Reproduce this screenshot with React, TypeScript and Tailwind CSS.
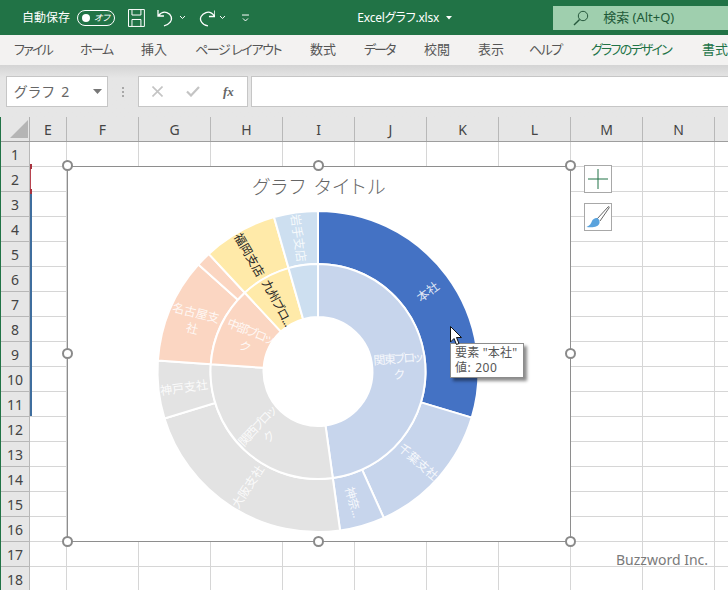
import React from "react";

const tabs = [
  { t: "ファイル", c: "w-[38px] tracking-[-1.75px]" },
  { t: "ホーム", c: "w-[33px] tracking-[-1.5px]" },
  { t: "挿入", c: "w-[26px]" },
  { t: "ページ レイアウト", c: "w-[87px] tracking-[-1.4px]" },
  { t: "数式", c: "w-[26px]" },
  { t: "データ", c: "w-[32px] tracking-[-2px]" },
  { t: "校閲", c: "w-[26px]" },
  { t: "表示", c: "w-[26px]" },
  { t: "ヘルプ", c: "w-[33px] tracking-[-1.5px] -ml-[3px] mr-[3px]" },
  { t: "グラフのデザイン", c: "w-[81px] tracking-[-1.75px] text-[#217346] -ml-[2px] mr-[2px]" },
  { t: "書式", c: "w-[26px] text-[#217346]" },
];

const cols = [
  { n: "E", c: "w-[37px]" },
  { n: "F", c: "w-[72px]" },
  { n: "G", c: "w-[72px]" },
  { n: "H", c: "w-[72px]" },
  { n: "I", c: "w-[72px]" },
  { n: "J", c: "w-[72px]" },
  { n: "K", c: "w-[72px]" },
  { n: "L", c: "w-[72px]" },
  { n: "M", c: "w-[72px]" },
  { n: "N", c: "w-[72px]" },
  { n: "", c: "w-[72px]" },
];

const rows = Array.from({ length: 18 }, (_, i) => i + 1);

const CX = 318;
const CY = 371.5;

function pt(r: number, deg: number) {
  const a = ((deg - 90) * Math.PI) / 180;
  return `${(CX + r * Math.cos(a)).toFixed(2)} ${(CY + r * Math.sin(a)).toFixed(2)}`;
}
function arc(r0: number, r1: number, a0: number, a1: number) {
  const large = a1 - a0 > 180 ? 1 : 0;
  return `M${pt(r1, a0)} A${r1} ${r1} 0 ${large} 1 ${pt(r1, a1)} L${pt(r0, a1)} A${r0} ${r0} 0 ${large} 0 ${pt(r0, a0)} Z`;
}

const outer = [
  { a: 0, b: 106.7, f: "#4472c4" },
  { a: 106.7, b: 155.8, f: "#c7d5ec" },
  { a: 155.8, b: 172.1, f: "#c7d5ec" },
  { a: 172.1, b: 253, f: "#e3e3e3" },
  { a: 253, b: 273.9, f: "#e3e3e3" },
  { a: 273.9, b: 311.8, f: "#fbd6c2" },
  { a: 311.8, b: 317.1, f: "#fbd6c2" },
  { a: 317.1, b: 344.1, f: "#ffeaa9" },
  { a: 344.1, b: 360, f: "#cddff0" },
];
const inner = [
  { a: 0, b: 172.1, f: "#c7d5ec" },
  { a: 172.1, b: 273.9, f: "#e3e3e3" },
  { a: 273.9, b: 317.1, f: "#fbd6c2" },
  { a: 317.1, b: 344.1, f: "#ffeaa9" },
  { a: 344.1, b: 360, f: "#cddff0" },
];

const labels: { x: number; y: number; r: number; l: string[]; dark?: boolean; c?: string }[] = [
  { x: 428, y: 292, r: -37, l: ["本社"] },
  { x: 398, y: 367, r: -4, l: ["関東ブロッ", "ク"], c: "tracking-[-1.5px]" },
  { x: 418, y: 462, r: 41, l: ["千葉支社"] },
  { x: 353, y: 502, r: 74, l: ["神奈..."], c: "tracking-[-0.5px]" },
  { x: 248, y: 487, r: -57, l: ["大阪支社"] },
  { x: 263, y: 432, r: -47, l: ["関西ブロッ", "ク"], c: "tracking-[-1.5px]" },
  { x: 184, y: 388, r: -8, l: ["神戸支社"] },
  { x: 194, y: 321, r: 14, l: ["名古屋支", "社"] },
  { x: 247, y: 339, r: 22, l: ["中部ブロッ", "ク"], c: "tracking-[-1.5px]" },
  { x: 249, y: 255, r: 60, l: ["福岡支店"], dark: true },
  { x: 277, y: 303, r: 62, l: ["九州ブロ..."], dark: true, c: "tracking-[-0.8px]" },
  { x: 298, y: 238, r: 82, l: ["岩手支店"] },
];

const handles = [
  "left-[62px] top-[160px]",
  "left-[313px] top-[160px]",
  "left-[565px] top-[160px]",
  "left-[62px] top-[348px]",
  "left-[565px] top-[348px]",
  "left-[62px] top-[536px]",
  "left-[313px] top-[536px]",
  "left-[565px] top-[536px]",
];

function Chevron({ className }: { className: string }) {
  return (
    <svg className={className} width="7" height="5" viewBox="0 0 7 5" fill="none" stroke="#fff" strokeWidth="1">
      <path d="M1 1 L3.5 3.5 L6 1" />
    </svg>
  );
}

export default function App() {
  return (
    <div className="relative w-[728px] h-[590px] overflow-hidden bg-white text-[#444] font-['Noto_Sans','Noto_Sans_CJK_JP',sans-serif] [font-feature-settings:'palt']">
      {/* Title bar */}
      <div className="h-[35px] bg-[#217346] flex items-center text-white relative">
        <span className="ml-[22px] text-[12px] w-[48px] whitespace-nowrap">自動保存</span>
        <div className="ml-[7px] w-[38px] h-[16px] rounded-full border border-white flex items-center pl-[4px] gap-[4px]">
          <div className="w-[8px] h-[8px] rounded-full bg-white" />
          <span className="text-[9px] leading-none italic">オフ</span>
        </div>
        <svg className="ml-[13px]" width="17" height="18" viewBox="0 0 17 18" fill="none" stroke="#fff" strokeWidth="1">
          <path d="M0.5 0.5 H16.5 V17.5 H0.5 Z M4 0.5 V6 H13 V0.5 M4 17.5 V10.5 H13 V17.5" />
        </svg>
        <svg className="ml-[12px]" width="17" height="18" viewBox="0 0 17 18" fill="none" stroke="#fff" strokeWidth="1.3">
          <path d="M1 1 V7 H7 M1.5 6.5 C4 3.5 7 2.5 10 3.5 C14.5 5 16 10 13 13.5 C11.5 15.5 9.5 16.5 7 17" />
        </svg>
        <Chevron className="ml-[5px]" />
        <svg className="ml-[12px]" width="18" height="18" viewBox="0 0 18 18" fill="none" stroke="#fff" strokeWidth="1.3">
          <path d="M17 1.5 V7.5 H11 M16.5 7 C14 3.5 11 2.5 8 3.5 C3.5 5 1 9.5 3.5 13 C5 15.5 7.5 16.5 10 17" />
        </svg>
        <Chevron className="ml-[4px]" />
        <svg className="ml-[16px]" width="7" height="8" viewBox="0 0 7 8" fill="none" stroke="#fff" strokeWidth="1">
          <path d="M0 1 H7 M1 4.5 L3.5 7 L6 4.5" />
        </svg>
        <span className="ml-[108px] text-[12px] tracking-[-0.2px] w-[82px] whitespace-nowrap">Excelグラフ.xlsx</span>
        <svg className="ml-[7px]" width="6" height="4" viewBox="0 0 6 4" fill="#fff">
          <path d="M0 0 H6 L3 3.5 Z" />
        </svg>
        <div className="ml-[101px] w-[176px] h-[24px] bg-[#9fcfae] flex items-center text-[#1e5a38]">
          <svg className="ml-[20px]" width="16" height="16" viewBox="0 0 16 16" fill="none" stroke="#27593d" strokeWidth="1">
            <circle cx="10" cy="6" r="4.7" />
            <path d="M6.6 9.4 L1 15" strokeWidth="1.4" />
          </svg>
          <span className="ml-[14px] text-[13px] whitespace-nowrap">検索 (Alt+Q)</span>
        </div>
      </div>

      {/* Tabs */}
      <div className="h-[30px] bg-[#f3f2f1] flex items-center pl-[14px] gap-[28px] text-[13px] text-[#555] relative z-10">
        {tabs.map((t) => (
          <span key={t.t} className={`${t.c} shrink-0 whitespace-nowrap`}>
            {t.t}
          </span>
        ))}
      </div>

      {/* Formula bar */}
      <div className="h-[52px] bg-gradient-to-b from-[#d4d4d4] to-[#e6e6e6] to-[25%] pt-[11px] pl-[6px] flex items-start">
        <div className="w-[102px] h-[31px] bg-white border border-[#c6c6c6] flex items-center pl-[7px] text-[14px] text-[#666] relative">
          <span className="tracking-[1.8px]">グラフ 2</span>
          <svg className="absolute left-[86px] top-[12px]" width="10" height="6" viewBox="0 0 10 6" fill="#777">
            <path d="M0 0 H9 L4.5 5 Z" />
          </svg>
        </div>
        <div className="w-[30px] h-[31px] flex flex-col items-center justify-center gap-[2px]">
          <div className="w-[2px] h-[2px] bg-[#a8a8a8]" />
          <div className="w-[2px] h-[2px] bg-[#a8a8a8]" />
          <div className="w-[2px] h-[2px] bg-[#a8a8a8]" />
        </div>
        <div className="w-[110px] h-[31px] bg-white border border-[#c6c6c6] flex items-center">
          <svg className="ml-[13px]" width="11" height="11" viewBox="0 0 11 11" stroke="#c4c4c4" strokeWidth="1.6">
            <path d="M0.5 0.5 L10.5 10.5 M10.5 0.5 L0.5 10.5" />
          </svg>
          <svg className="ml-[23px]" width="14" height="11" viewBox="0 0 14 11" fill="none" stroke="#c4c4c4" strokeWidth="2.2">
            <path d="M1 5.5 L5 9.5 L13 1" />
          </svg>
          <span className="ml-[23px] text-[13px] font-bold italic text-[#666] font-['Liberation_Serif',serif]">fx</span>
        </div>
        <div className="ml-[3px] flex-1 h-[31px] bg-white border-y border-l border-[#c6c6c6]" />
      </div>

      {/* Sheet */}
      <div className="border-l border-[#217346] relative">
        <div className="flex h-[24px] bg-[#e6e6e6] border-b border-[#9e9e9e] box-content relative">
          <div className="w-[29px] shrink-0 border-r border-[#b0b0b0] relative">
            <svg className="absolute left-[9px] top-[3px]" width="18" height="18" viewBox="0 0 18 18" fill="#b5b5b5">
              <path d="M18 0 V18 H0 Z" />
            </svg>
          </div>
          {cols.map((c, i) => (
            <div key={i} className={`${c.c} shrink-0 border-r border-[#b8b8b8] flex items-center justify-center text-[14px] text-[#444]`}>
              {c.n}
            </div>
          ))}
        </div>
        {rows.map((r) => (
          <div key={r} className="flex h-[25px]">
            <div className="w-[29px] shrink-0 bg-[#e6e6e6] border-r border-b border-[#b8b8b8] flex items-center justify-center text-[14px] text-[#444]">
              {r}
            </div>
            {cols.map((c, i) => (
              <div key={i} className={`${c.c} shrink-0 border-r border-b border-[#d6d6d6]`} />
            ))}
          </div>
        ))}
      </div>

      {/* Range markers */}
      <div className="absolute left-[30px] top-[191px] w-[1.5px] h-[225px] bg-[#3f6e9e]" />
      <div className="absolute left-[30px] top-[166px] w-[1px] h-[25px] bg-[#b8434f]" />
      <div className="absolute left-[30px] top-[164px] w-[2px] h-[5px] bg-[#a8323e]" />
      <div className="absolute left-[30px] top-[189px] w-[2px] h-[5px] bg-[#a8323e]" />

      {/* Chart */}
      <div className="absolute left-[67px] top-[166px] w-[504px] h-[376px] bg-white border border-[#8e8e8e]" />
      <svg className="absolute left-0 top-0" width="728" height="590" viewBox="0 0 728 590">
        {outer.map((s, i) => (
          <path key={i} d={arc(107.5, 160.5, s.a, s.b)} fill={s.f} stroke="#fff" strokeWidth="2" />
        ))}
        {inner.map((s, i) => (
          <path key={i} d={arc(54.5, 107.5, s.a, s.b)} fill={s.f} stroke="#fff" strokeWidth="2" />
        ))}
        {labels.map((l, i) => (
          <text
            key={i}
            transform={`translate(${l.x} ${l.y}) rotate(${l.r})`}
            textAnchor="middle"
            fontSize="12"
            className={l.c}
            fill={l.dark ? "#262626" : "#ffffff"}
            fillOpacity={l.dark ? 1 : 0.85}
          >
            {l.l.map((s, j) => (
              <tspan key={j} x="0" y={(j - (l.l.length - 1) / 2) * 16 + 4}>
                {s}
              </tspan>
            ))}
          </text>
        ))}
      </svg>
      <div className="absolute left-[252px] top-[175px] text-[19px] leading-[24px] tracking-[1.9px] text-[#666] whitespace-nowrap font-light">
        グラフ タイトル
      </div>

      {handles.map((h) => (
        <div key={h} className={`absolute ${h} w-[11px] h-[11px] rounded-full bg-white border-2 border-[#8a8a8a]`} />
      ))}

      {/* Chart buttons */}
      <div className="absolute left-[584px] top-[165px] w-[28px] h-[28px] bg-white border border-[#a8a8a8] flex items-center justify-center">
        <svg width="20" height="20" viewBox="0 0 20 20" stroke="#217346" strokeWidth="1">
          <path d="M10 0 V20 M0 10 H20" />
        </svg>
      </div>
      <div className="absolute left-[584px] top-[203px] w-[28px] h-[28px] bg-white border border-[#a8a8a8] flex items-center justify-center">
        <svg width="26" height="26" viewBox="0 0 26 26" fill="none">
          <path d="M12 15 L23 3 C24 2 24.5 3 24 4 L15 17" fill="#fff" stroke="#666" strokeWidth="1" />
          <path d="M11 14 C13 13.5 15 16 14.5 19 C13.5 23 8 24 1.5 23 C5 21.5 6 19.5 7 17 C7.5 15.5 9 14.5 11 14 Z" fill="#5aa3dd" />
        </svg>
      </div>

      {/* Tooltip */}
      <div className="absolute left-[450px] top-[343px] w-[74px] h-[35px] bg-white border border-[#8c8c8c] shadow-[3px_3px_3px_rgba(0,0,0,0.45)] pl-[4px] pt-[1px] text-[12px] leading-[15px] text-[#555] whitespace-nowrap tracking-[0.2px]">
        <div>要素 "本社"</div>
        <div className="tracking-[0.6px]">値: 200</div>
      </div>
      <svg className="absolute left-[450px] top-[326px]" width="13" height="20" viewBox="0 0 13 20">
        <path d="M0.5 0.5 V16 L4 12.5 L6.5 18.5 L9 17.5 L6.5 11.5 L11.5 11.5 Z" fill="#fff" stroke="#111" strokeWidth="1" />
      </svg>

      {/* Watermark */}
      <div className="absolute left-[616px] top-[551px] text-[14px] leading-[18px] text-[#7a7a7a] whitespace-nowrap [text-shadow:0_0_3px_#fff]">
        Buzzword Inc.
      </div>
    </div>
  );
}
